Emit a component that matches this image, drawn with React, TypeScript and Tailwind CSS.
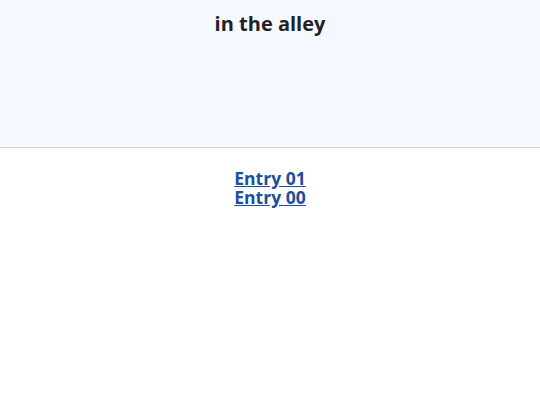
import React from "react";

const entries = ["Entry 01", "Entry 00"];

export default function App() {
  return (
    <div
      className="min-h-[405px] bg-white"
      style={{ fontFamily: '"Open Sans", "Noto Sans", sans-serif' }}
    >
      <header className="h-[148px] bg-[#f5f8ff] border-b border-[#c9d2e3] pt-[10px]">
        <h1 className="text-center text-[20px] leading-[28px] font-bold text-[#222]">in the alley</h1>
      </header>
      <nav className="flex flex-col items-center pt-[21px]">
        {entries.map((e) => (
          <a
            key={e}
            href="#"
            className="text-[17.5px] leading-[19px] font-bold text-[#1d4f9c] underline"
          >
            {e}
          </a>
        ))}
      </nav>
    </div>
  );
}
